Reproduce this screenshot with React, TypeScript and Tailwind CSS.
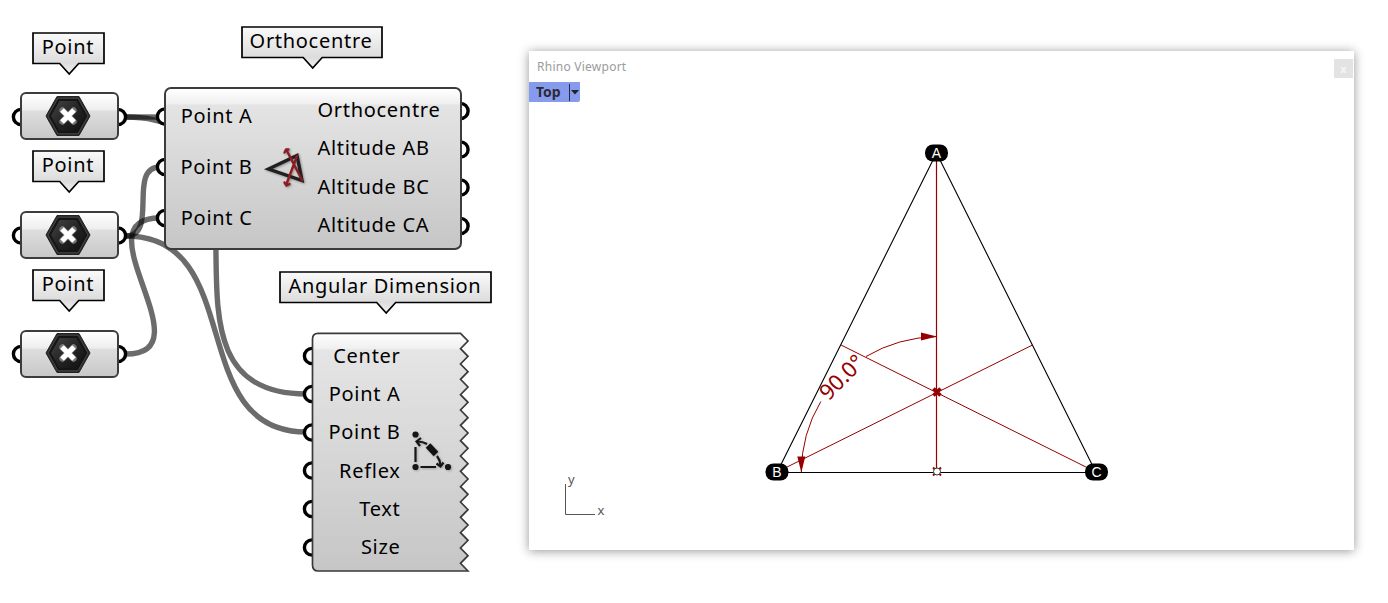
import React from "react";

const nodeText = "font-['Noto_Sans','Noto_Sans_CJK_SC',sans-serif] text-[20px] tracking-[0.7px] whitespace-nowrap text-black";

const wires: [number, number, number, number, number][] = [
  [126, 117, 158, 117, 12],
  [126, 117, 306, 394, 177],
  [126, 236, 160, 167, 33],
  [126, 236, 306, 432, 122],
  [126, 354, 160, 218, 82],
];

const grips: [number, number][] = [
  [21, 117], [118, 117], [21, 235.5], [118, 235.5], [21, 354], [118, 354],
  [165, 116.5], [165, 167], [165, 218],
  [460.5, 111], [460.5, 149.5], [460.5, 187.5], [460.5, 226],
  [312, 356], [312, 394], [312, 432.5], [312, 470.5], [312, 509], [312, 547.5],
];

function Wires() {
  return (
    <svg className="absolute inset-0" width="529" height="603">
      {wires.map(([x1, y1, x2, y2, c], i) => (
        <path key={i} d={`M${x1} ${y1}C${x1 + c} ${y1} ${x2 - c} ${y2} ${x2} ${y2}`} fill="none" stroke="#000" strokeOpacity="0.58" strokeWidth="5.4" />
      ))}
      {grips.map(([x, y], i) => (
        <circle key={i} cx={x} cy={y} r="7.6" fill="#fff" stroke="#000" strokeWidth="3.4" />
      ))}
    </svg>
  );
}

function Callout({ text, className, width }: { text: string; className: string; width: number }) {
  const m = width / 2 + 1.2;
  return (
    <div className={`grid h-[43px] shrink-0 ${className}`}>
      <svg className="col-start-1 row-start-1" width={width + 3} height="44">
        <defs>
          <linearGradient id={`callout-${width}`} x1="0" y1="0" x2="0" y2="1">
            <stop offset="0" stopColor="#fafafa" />
            <stop offset="0.74" stopColor="#dcdcdc" />
            <stop offset="0.8" stopColor="#e2e2e2" />
            <stop offset="1" stopColor="#f0f0f0" />
          </linearGradient>
        </defs>
        <path d={`M1 1H${width}V31.5H${m + 9.5}L${m} 42L${m - 9.5} 31.5H1Z`} fill={`url(#callout-${width})`} stroke="#000" strokeWidth="1.7" />
      </svg>
      <span className={`col-start-1 row-start-1 pr-[3px] text-center leading-[29px] ${nodeText}`}>{text}</span>
    </div>
  );
}

function PointParam() {
  return (
    <div className="flex h-[48.5px] w-[98.5px] shrink-0 items-center justify-center rounded-[6px] border-2 border-[#3c3c3c] bg-[linear-gradient(#ffffff_0,#eeeeee_16px,#dedede_17px,#c8c8c8_100%)] pb-px pr-[3px]">
      <svg width="46" height="42" viewBox="0 0 46 42">
        <defs>
          <linearGradient id="hex" x1="0" y1="0" x2="1" y2="1">
            <stop offset="0" stopColor="#444" />
            <stop offset="0.5" stopColor="#242424" />
            <stop offset="1" stopColor="#101010" />
          </linearGradient>
        </defs>
        <path d="M12 1.5H34L45 21L34 40.5H12L1 21Z" fill="#2a2a2a" stroke="#222" strokeWidth="1" strokeLinejoin="round" />
        <path d="M13 3.2H33L43 21L33 38.8H13L3 21Z" fill="#151515" stroke="#484848" strokeWidth="1" />
        <path d="M14.5 6H31.5L40 21L31.5 36H14.5L6 21Z" fill="url(#hex)" />
        <path d="M17.5 15.5L28.5 26.5M28.5 15.5L17.5 26.5" stroke="#777" strokeWidth="6.4" strokeLinecap="round" />
        <path d="M17 15L29 27M29 15L17 27" stroke="#fff" strokeWidth="5" />
      </svg>
    </div>
  );
}

function OrthocentreIcon() {
  return (
    <svg className="drop-shadow-[1px_1px_1px_rgba(0,0,0,0.35)]" width="46" height="46" viewBox="263 145 46 46">
      <path d="M268.5 169L297 155.5L302 180.5Z" fill="none" stroke="#202020" strokeWidth="3.4" strokeLinejoin="miter" />
      <path d="M287 151L302 180M297 156L286.5 184" stroke="#8c1c20" strokeWidth="2.4" strokeLinecap="round" />
      <path d="M284.5 152.5L286 149.5H288.5M284.5 182.5L286.5 185.5L289.5 184" fill="none" stroke="#8c1c20" strokeWidth="2.4" strokeLinejoin="round" strokeLinecap="round" />
    </svg>
  );
}

function AngularIcon() {
  return (
    <svg className="drop-shadow-[1px_1px_1px_rgba(0,0,0,0.25)]" width="44" height="44" viewBox="410 428 44 44">
      <g fill="#151515">
        <circle cx="415.5" cy="434.5" r="3.1" />
        <circle cx="415.5" cy="467" r="3.1" />
        <circle cx="448" cy="467" r="3.1" />
      </g>
      <g fill="none" stroke="#151515" strokeWidth="2.2">
        <path d="M415.5 447V462M420.5 467H436M417 441.5Q423 441.5 427 444M437 456Q440 460 440.5 465" />
        <path d="M421 438L416.5 441.5L420 446M436.5 463.5L440.5 466.5L443.5 462.5" />
      </g>
      <path d="M428 445.5L436 454" stroke="#111" strokeWidth="6.4" />
    </svg>
  );
}

function OrthocentreNode() {
  return (
    <div className="flex h-[163px] w-[298px] shrink-0 rounded-[7px] border-2 border-[#3c3c3c] bg-[linear-gradient(#ffffff_0,#efefef_15px,#e4e4e4_16px,#c6c6c6_100%)]">
      <div className="flex w-[86.5px] flex-col items-end pt-[2px]">
        {["Point A", "Point B", "Point C"].map((t) => (
          <span key={t} className={`h-[51px] leading-[49px] ${nodeText}`}>{t}</span>
        ))}
      </div>
      <div className="flex flex-1 items-center pb-[2px] pl-[10.5px]"><OrthocentreIcon /></div>
      <div className="flex w-[142.5px] flex-col pt-[2px]">
        {["Orthocentre", "Altitude AB", "Altitude BC", "Altitude CA"].map((t) => (
          <span key={t} className={`h-[38.3px] leading-[37px] ${nodeText}`}>{t}</span>
        ))}
      </div>
    </div>
  );
}

function AngularNode() {
  let edge = "M468 571";
  for (let k = 30; k >= 0; k--) edge += `L${k % 2 ? 468 : 460.5} ${(333.3 + k * 7.667).toFixed(2)}`;
  return (
    <div className="ml-8 grid h-[240px] w-[159px] shrink-0">
      <svg className="col-start-1 row-start-1" width="159" height="240" viewBox="311 332 159 240">
        <defs>
          <linearGradient id="angular" x1="0" y1="0" x2="0" y2="1">
            <stop offset="0" stopColor="#fff" />
            <stop offset="0.066" stopColor="#efefef" />
            <stop offset="0.07" stopColor="#e5e5e5" />
            <stop offset="1" stopColor="#c6c6c6" />
          </linearGradient>
        </defs>
        <path d={`${edge}H318Q312.5 333.3 312.5 339V565Q312.5 571 318 571Z`} fill="url(#angular)" stroke="#3a3a3a" strokeWidth="1.7" />
      </svg>
      <div className="col-start-1 row-start-1 flex items-center gap-[9.5px] pb-1">
        <div className="flex w-[89.5px] flex-col items-end pt-[3px]">
          {["Center", "Point A", "Point B", "Reflex", "Text", "Size"].map((t) => (
            <span key={t} className={`h-[38.3px] leading-[37px] ${nodeText}`}>{t}</span>
          ))}
        </div>
        <AngularIcon />
      </div>
    </div>
  );
}

function Vertex({ x, y, name }: { x: number; y: number; name: string }) {
  return (
    <g>
      <rect x={x - 11.5} y={y - 8.5} width="23" height="17" rx="8" fill="#000" />
      <text x={x} y={y + 5} textAnchor="middle" fill="#fff" fontSize="14" fontFamily="Liberation Sans, sans-serif">{name}</text>
    </g>
  );
}

function Drawing() {
  return (
    <svg className="col-start-1 row-start-1" width="825" height="499" viewBox="529 51 825 499">
      <path d="M936.5 153L777 472.5H1096Z" fill="none" stroke="#000" strokeWidth="1.1" />
      <g fill="none" stroke="#960000" strokeWidth="1">
        <path d="M777 472L1032.5 345M1096 472L841 345" />
        <path d="M936.5 153V472" strokeWidth="1.2" />
        <path d="M801.3 472Q801.5 434 820.8 401.5M866 356.5Q898 337.5 937 336.5" />
      </g>
      <path d="M937 336.5L921 332.5V340.5ZM801.3 472.5L797.3 456.5H805.3Z" fill="#960000" />
      <text transform="translate(841.5 377) rotate(-45)" x="0" y="8" textAnchor="middle" fill="#960000" fontSize="22" fontFamily="Noto Sans, sans-serif">90.0°</text>
      <path d="M933.5 388.5L940.5 395.5M940.5 388.5L933.5 395.5" stroke="#960000" strokeWidth="3.6" />
      <path d="M933 467.5L941 475.5M941 467.5L933 475.5" stroke="#960000" strokeWidth="2" />
      <circle cx="937" cy="471.5" r="3.5" fill="#fff" stroke="#333" strokeWidth="1" />
      <Vertex x={936.5} y={153} name="A" />
      <Vertex x={777} y={472} name="B" />
      <Vertex x={1096.5} y={472} name="C" />
      <path d="M565.5 484V514.5H595" fill="none" stroke="#555" strokeWidth="1" />
      <g fill="#555" fontSize="13" fontFamily="Noto Sans, sans-serif">
        <text x="568" y="483.5">y</text>
        <text x="597.5" y="515">x</text>
      </g>
    </svg>
  );
}

function Viewport() {
  return (
    <section className="mt-[51px] grid h-[499px] w-[825px] shrink-0 bg-white shadow-[0_1px_10px_rgba(0,0,0,0.42)]">
      <Drawing />
      <div className="col-start-1 row-start-1 flex flex-col items-start">
        <header className="flex h-[31px] w-full justify-between pr-px">
          <span className="pl-2 font-['Noto_Sans',sans-serif] text-[12px] leading-[31px] tracking-[0.25px] text-[#9b9b9b]">Rhino Viewport</span>
          <button className="mt-2 flex size-[19px] items-center justify-center bg-[#e3e3e3] font-['Noto_Sans',sans-serif] text-[11px] font-bold leading-none text-[#f5f5f5]">x</button>
        </header>
        <div className="flex h-5 w-[51px] items-center rounded-br-[2px] bg-[#869bed]">
          <span className="w-10 pl-[7px] font-['Noto_Sans',sans-serif] text-[14px] font-bold leading-5 text-[#2b2b33]">Top</span>
          <span className="h-[17px] w-px bg-[#2b2b33]" />
          <svg className="ml-px" width="8" height="5"><path d="M0 0H8L4 4.5Z" fill="#222" /></svg>
        </div>
      </div>
    </section>
  );
}

export default function App() {
  return (
    <main className="flex h-[603px] w-[1388px] items-start overflow-hidden bg-white">
      <section className="relative flex h-full w-[529px] shrink-0 pl-5">
        <Wires />
        <div className="relative flex w-36 flex-col gap-[10px] pt-[31.5px]">
          {["a", "b", "c"].map((id) => (
            <div key={id} className="flex flex-col gap-[17.4px]">
              <Callout text="Point" className="ml-3 w-[75px]" width={72} />
              <PointParam />
            </div>
          ))}
        </div>
        <div className="relative flex flex-col gap-[21px] pt-[25.5px]">
          <div className="flex flex-col gap-[18.5px]">
            <Callout text="Orthocentre" className="ml-[76.5px] w-[144px]" width={141} />
            <OrthocentreNode />
          </div>
          <div className="flex flex-col gap-[18px] pl-[115px]">
            <Callout text="Angular Dimension" className="w-[215px]" width={212} />
            <AngularNode />
          </div>
        </div>
      </section>
      <Viewport />
    </main>
  );
}
